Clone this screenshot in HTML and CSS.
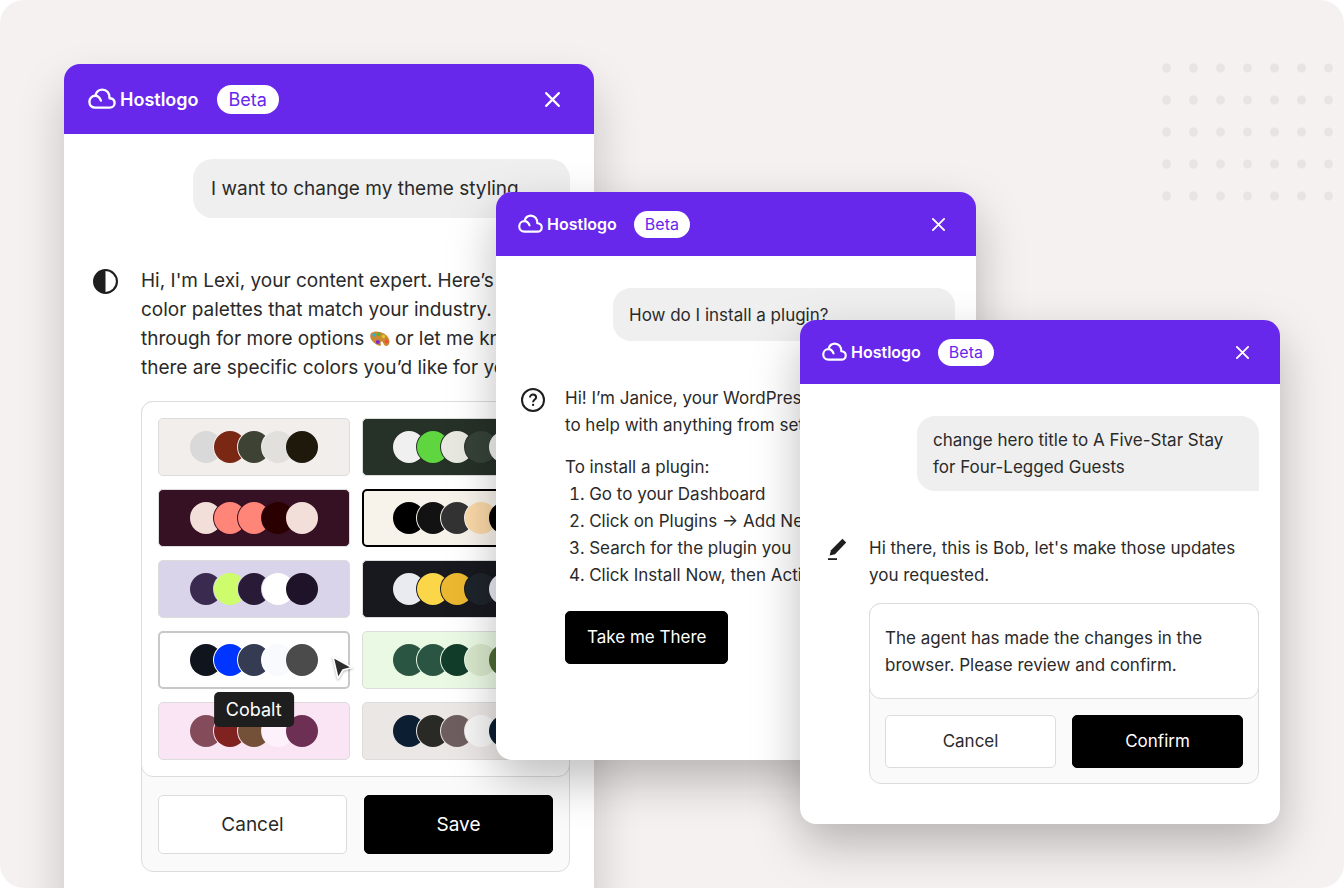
FILE: index.html
```
<!DOCTYPE html>
<html lang="en">
<head>
<meta charset="utf-8">
<title>Hostlogo assistant</title>
<link rel="stylesheet" href="styles.css">
</head>
<body>
<svg class="sprite" aria-hidden="true">
  <symbol id="cloud" viewBox="0 0 28 22">
    <path d="M12.900 12.600C11.700 9.400 9.600 7.800 7.200 7.800C4 7.800 1.400 10.400 1.400 13.800C1.400 17.400 4 19.600 7.200 19.600H21.800C24.600 19.600 26.600 17.600 26.600 14.900C26.600 12.100 24.600 10.400 21.600 10.200C21.900 5.200 18.600 1.600 14.400 1.600C11 1.600 8.200 3.800 7.200 7.800" fill="none" stroke="currentColor" stroke-width="2.400" stroke-linejoin="round" stroke-linecap="round"/>
  </symbol>
  <symbol id="close" viewBox="0 0 16 16">
    <path d="M2 2L14 14M14 2L2 14" fill="none" stroke="currentColor" stroke-width="2" stroke-linecap="round"/>
  </symbol>
</svg>
<main class="stage">
  <div class="dots"></div>

  <section class="card card-theme">
    <header class="card-header">
      <div class="brand"><svg class="brand-mark"><use href="#cloud"/></svg>Hostlogo</div>
      <span class="badge">Beta</span>
      <button class="close" aria-label="Close"><svg><use href="#close"/></svg></button>
    </header>
    <p class="bubble">I want to change my theme styling</p>
    <div class="message">
      <svg class="avatar" viewBox="0 0 24 24"><circle cx="12" cy="12" r="11" fill="none" stroke="currentColor" stroke-width="2"/><path d="M12 1A11 11 0 0 0 12 23Z" fill="currentColor"/></svg>
      <div class="content">
        <p class="lines">Hi, I'm Lexi, your content expert. Here’s<br>color palettes that match your industry.<br>through for more options <svg class="emoji" viewBox="0 0 20 16" role="img" aria-label="palette"><path d="M2 1.6C5 -.4 10 .2 14 2.6C18 5 20 8.6 19.4 11.8C19 14.6 16.6 15.8 14.4 14.2C13 13 13.4 11.2 12 10.6C10.6 10.2 10.4 12 11 13.4C11.4 14.8 9.6 15.4 7.4 14C3.600 12 .4 8.600 .2 5.400C.1 3.600 .8 2.300 2 1.600Z" fill="#c98a32"/><circle cx="4" cy="4" r="1.700" fill="#2db0d8"/><circle cx="8.600" cy="3.200" r="1.800" fill="#48b83c"/><circle cx="13.400" cy="5.600" r="1.800" fill="#e8c22c"/><circle cx="16.600" cy="10.400" r="2" fill="#ee5238"/><circle cx="7.800" cy="11" r="2" fill="#7c2ad0"/></svg> or let me know<br>there are specific colors you’d like for your</p>
        <div class="panel">
          <div class="panel-top palettes">
            <button class="tile t1" aria-label="Stone"><i></i><i></i><i></i><i></i><i></i></button>
            <button class="tile t2" aria-label="Forest"><i></i><i></i><i></i><i></i><i></i></button>
            <button class="tile t3" aria-label="Wine"><i></i><i></i><i></i><i></i><i></i></button>
            <button class="tile t4" aria-label="Sand"><i></i><i></i><i></i><i></i><i></i></button>
            <button class="tile t5" aria-label="Lavender"><i></i><i></i><i></i><i></i><i></i></button>
            <button class="tile t6" aria-label="Night"><i></i><i></i><i></i><i></i><i></i></button>
            <button class="tile t7" aria-label="Cobalt"><i></i><i></i><i></i><i></i><i></i><span class="tooltip">Cobalt</span><svg class="cursor" viewBox="0 0 24 26"><path d="M3 2L22 12.500L13 15L8 23.500Z" fill="#2d2d2d" stroke="#fff" stroke-width="1.600" stroke-linejoin="round"/></svg></button>
            <button class="tile t8" aria-label="Mint"><i></i><i></i><i></i><i></i><i></i></button>
            <button class="tile t9" aria-label="Rose"><i></i><i></i><i></i><i></i><i></i></button>
            <button class="tile t10" aria-label="Slate"><i></i><i></i><i></i><i></i><i></i></button>
          </div>
          <div class="actions">
            <button class="button">Cancel</button>
            <button class="button button-primary">Save</button>
          </div>
        </div>
      </div>
    </div>
  </section>

  <section class="card card-plugin">
    <header class="card-header">
      <div class="brand"><svg class="brand-mark"><use href="#cloud"/></svg>Hostlogo</div>
      <span class="badge">Beta</span>
      <button class="close" aria-label="Close"><svg><use href="#close"/></svg></button>
    </header>
    <p class="bubble">How do I install a plugin?</p>
    <div class="message">
      <svg class="avatar" viewBox="0 0 24 24" fill="none" stroke="currentColor" stroke-width="2"><circle cx="12" cy="12" r="11"/><path d="M9 9.500C9 7.700 10.300 6.600 12 6.600S15.100 7.700 15.100 9.400C15.100 11.500 12.100 11.700 12.100 14.300"/><path d="M12.100 15.800V17.900"/></svg>
      <div class="content">
        <p class="lines">Hi! I’m Janice, your WordPress<br>to help with anything from setup</p>
        <p class="lines steps-title">To install a plugin:</p>
        <ol class="steps">
          <li>Go to your Dashboard</li>
          <li>Click on Plugins → Add New</li>
          <li>Search for the plugin you</li>
          <li>Click Install Now, then Activate</li>
        </ol>
        <button class="button button-primary button-go">Take me There</button>
      </div>
    </div>
  </section>

  <section class="card card-confirm">
    <header class="card-header">
      <div class="brand"><svg class="brand-mark"><use href="#cloud"/></svg>Hostlogo</div>
      <span class="badge">Beta</span>
      <button class="close" aria-label="Close"><svg><use href="#close"/></svg></button>
    </header>
    <p class="bubble">change hero title to A Five-Star Stay<br>for Four-Legged Guests</p>
    <div class="message">
      <svg class="avatar" viewBox="0 0 24 24" fill="currentColor"><path d="M17.400 .8L21.200 4.400L10 16.200L4.600 17.600L6 12.200Z"/><path d="M3 20.200H12V22H3Z"/></svg>
      <div class="content">
        <p class="lines">Hi there, this is Bob, let's make those updates<br>you requested.</p>
        <div class="panel">
          <div class="panel-top notice">The agent has made the changes in the<br>browser. Please review and confirm.</div>
          <div class="actions">
            <button class="button">Cancel</button>
            <button class="button button-primary">Confirm</button>
          </div>
        </div>
      </div>
    </div>
  </section>
</main>
</body>
</html>
```
FILE: styles.css
```
* {
  box-sizing: border-box;
}

body {
  margin: 0;
  background: #fff;
  color: #2a2a2a;
  font-family: Inter, "Liberation Sans", sans-serif;
}

p,
ol {
  margin: 0;
}

button {
  font: inherit;
  color: inherit;
  padding: 0;
  cursor: pointer;
}

.sprite {
  display: none;
}

.stage {
  position: relative;
  height: 100vh;
  overflow: hidden;
  border-radius: 24px;
  background: #f5f1f0;
}

.dots {
  position: absolute;
  top: 52px;
  right: 2px;
  width: 189px;
  height: 160px;
  background: radial-gradient(circle, #e7e4e3 4px, transparent 5px) 0 0 / 27px 32px;
}

/* Assistant windows, overlapping on the stage */
.card {
  --line: 27px;
  --header: 64px;
  --gutter: 69px;
  --icon-left: 25px;
  --mark: 25px;
  --button: 53px;
  position: absolute;
  width: 480px;
  overflow: hidden;
  border-radius: 16px;
  background: #fff;
  font-size: 17px;
  line-height: var(--line);
}

.card-theme {
  --line: 29px;
  --header: 70px;
  --gutter: 77px;
  --icon-left: 29px;
  --mark: 28px;
  --button: 59px;
  top: 64px;
  left: 64px;
  width: 530px;
  padding-bottom: 40px;
  font-size: 19px;
  box-shadow: 0 24px 48px rgba(0, 0, 0, 0.2);
}

.card-plugin {
  top: 192px;
  left: 496px;
  padding-bottom: 96px;
  box-shadow: 0 20px 48px rgba(0, 0, 0, 0.26);
}

.card-confirm {
  top: 320px;
  left: 800px;
  padding-bottom: 40px;
  box-shadow: 0 20px 48px rgba(0, 0, 0, 0.26);
}

.card-header {
  display: flex;
  align-items: center;
  height: var(--header);
  padding: 0 30px 0 22px;
  background: #6728eb;
  color: #fff;
}

.brand {
  display: flex;
  align-items: center;
  gap: 4px;
  font-size: 16px;
  font-weight: 600;
}

.brand-mark {
  width: var(--mark);
  height: 20px;
}

.badge {
  margin-left: 17px;
  padding: 0 11px;
  border-radius: 16px;
  background: #fff;
  color: #6728eb;
  font-size: 16px;
}

.close {
  display: flex;
  margin-left: auto;
  border: 0;
  background: none;
}

.close svg {
  width: 15px;
  height: 15px;
}

.card-theme .card-header {
  padding: 0 33px 0 24px;
}

.card-theme .brand {
  font-size: 18px;
}

.card-theme .brand-mark {
  height: 22px;
}

.card-theme .badge {
  margin-left: 18px;
  padding: 0 12px;
  font-size: 18px;
}

.card-theme .close svg {
  width: 17px;
  height: 17px;
}

.bubble {
  display: flex;
  flex-direction: column;
  justify-content: center;
  min-height: 53px;
  margin: 32px 21px 44px 117px;
  padding: 11px 16px 10px;
  border-radius: 18px 18px 0 18px;
  background: #efefef;
}

.card-theme .bubble {
  min-height: 59px;
  margin: 25px 24px 48px 129px;
  padding: 0 18px;
  border-radius: 20px 20px 0 20px;
}

.message {
  display: grid;
  grid-template-columns: calc(var(--gutter) - var(--icon-left)) 1fr;
  padding: 0 21px 0 var(--icon-left);
}

.card-theme .message {
  padding-right: 24px;
}

.avatar {
  width: 24px;
  height: 24px;
  margin-top: 3px;
  color: #1e1e1e;
}

.card-theme .avatar {
  width: 25px;
  height: 25px;
}

.content {
  min-width: 0;
}

.lines {
  white-space: nowrap;
}

.emoji {
  width: 20px;
  height: 16px;
  vertical-align: -2px;
}

.steps-title {
  margin-top: 15px;
}

.steps {
  padding-left: 4px;
  list-style-position: inside;
  white-space: nowrap;
}

.panel {
  margin-top: 14px;
  border: 1px solid #dcdcdc;
  border-radius: 12px;
  background: #fafafa;
}

.card-theme .panel {
  margin-top: 19px;
}

.panel-top {
  margin: -1px;
  border: 1px solid #dcdcdc;
  border-radius: 12px;
  background: #fff;
}

.notice {
  padding: 21px 15px 19px;
}

.actions {
  display: grid;
  grid-template-columns: 1fr 1fr;
  gap: 16px;
  padding: 17px 15px 15px;
}

.card-theme .actions {
  gap: 17px;
  padding: 19px 16px 17px;
}

.button {
  height: var(--button);
  border: 1px solid #dcdcdc;
  border-radius: 5px;
  background: #fff;
}

.button-primary {
  border-color: #000;
  background: #000;
  color: #fff;
}

.button-go {
  margin-top: 22px;
  padding: 0 21px;
}

/* Colour palette picker */
.palettes {
  display: grid;
  grid-template-columns: 1fr 1fr;
  gap: 13px 12px;
  padding: 16px;
}

.tile {
  position: relative;
  display: flex;
  align-items: center;
  justify-content: center;
  height: 58px;
  border: 1px solid #dcdcdc;
  border-radius: 5px;
  background: var(--tile);
}

.tile i {
  width: 32px;
  height: 32px;
  margin-left: -8px;
  border-radius: 50%;
  background: var(--c);
  box-shadow: 0 0 0 1px var(--tile);
}

.tile i:first-child {
  margin-left: 0;
}

.tile i:nth-child(5) {
  box-shadow: none;
}

.tooltip {
  position: absolute;
  z-index: 1;
  top: 59px;
  left: 50%;
  transform: translateX(-50%);
  padding: 3px 12px;
  border-radius: 5px;
  background: #1e1e1e;
  color: #fff;
  font-size: 18px;
}

.cursor {
  position: absolute;
  top: 22px;
  right: -6px;
  width: 24px;
  height: 26px;
  filter: drop-shadow(0 1px 1px rgba(0, 0, 0, 0.3));
}

.t1 { --tile: #f2eeeb; }
.t1 i:nth-child(1) { --c: #d9d9d9; }
.t1 i:nth-child(2) { --c: #7a2813; }
.t1 i:nth-child(3) { --c: #3e4234; }
.t1 i:nth-child(4) { --c: #e1e0dc; }
.t1 i:nth-child(5) { --c: #1e190b; }

.t2 { --tile: #263128; }
.t2 i:nth-child(1) { --c: #f0f0f0; }
.t2 i:nth-child(2) { --c: #5fd640; }
.t2 i:nth-child(3) { --c: #e8e8e0; }
.t2 i:nth-child(4) { --c: #364238; }
.t2 i:nth-child(5) { --c: #f0f0f0; }

.t3 { --tile: #361023; }
.t3 i:nth-child(1) { --c: #f3dfd9; }
.t3 i:nth-child(2) { --c: #ff8578; }
.t3 i:nth-child(3) { --c: #ff8578; }
.t3 i:nth-child(4) { --c: #2b0000; }
.t3 i:nth-child(5) { --c: #f3dfd9; }

.t4 { --tile: #f7f2ea; border: 2px solid #000; }
.t4 i:nth-child(1) { --c: #000; }
.t4 i:nth-child(2) { --c: #121212; }
.t4 i:nth-child(3) { --c: #333; }
.t4 i:nth-child(4) { --c: #fad8a8; }
.t4 i:nth-child(5) { --c: #000; }

.t5 { --tile: #d9d4ea; }
.t5 i:nth-child(1) { --c: #3b2a50; }
.t5 i:nth-child(2) { --c: #cdfd6d; }
.t5 i:nth-child(3) { --c: #291b38; }
.t5 i:nth-child(4) { --c: #fff; }
.t5 i:nth-child(5) { --c: #1e1329; }

.t6 { --tile: #17191f; }
.t6 i:nth-child(1) { --c: #e9ebf1; }
.t6 i:nth-child(2) { --c: #fad648; }
.t6 i:nth-child(3) { --c: #ecb832; }
.t6 i:nth-child(4) { --c: #1e242b; }
.t6 i:nth-child(5) { --c: #e9ebf1; }

.t7 { --tile: #fff; border: 2px solid #c8c8c8; }
.t7 i:nth-child(1) { --c: #10141d; }
.t7 i:nth-child(2) { --c: #0035ff; }
.t7 i:nth-child(3) { --c: #343b52; }
.t7 i:nth-child(4) { --c: #f8fafd; }
.t7 i:nth-child(5) { --c: #4b4b4b; }

.t8 { --tile: #eaf9e4; }
.t8 i:nth-child(1) { --c: #2b5543; }
.t8 i:nth-child(2) { --c: #2b5543; }
.t8 i:nth-child(3) { --c: #123d2a; }
.t8 i:nth-child(4) { --c: #d8e8cb; }
.t8 i:nth-child(5) { --c: #4e6a34; }

.t9 { --tile: #fae5f5; }
.t9 i:nth-child(1) { --c: #844c5a; }
.t9 i:nth-child(2) { --c: #802220; }
.t9 i:nth-child(3) { --c: #735038; }
.t9 i:nth-child(4) { --c: #fdf2fb; }
.t9 i:nth-child(5) { --c: #6e2f55; }

.t10 { --tile: #ebe7e5; }
.t10 i:nth-child(1) { --c: #0b1e32; }
.t10 i:nth-child(2) { --c: #292926; }
.t10 i:nth-child(3) { --c: #6f5e60; }
.t10 i:nth-child(4) { --c: #f6f6f6; }
.t10 i:nth-child(5) { --c: #0b1e32; }
```
